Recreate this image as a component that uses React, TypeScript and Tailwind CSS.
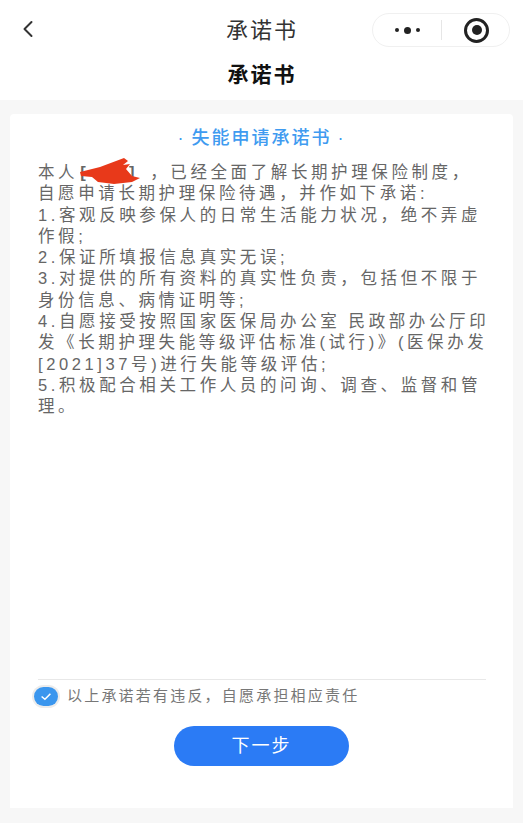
import { ChevronLeft } from "lucide-react";

const lines = [
  "自愿申请长期护理保险待遇，并作如下承诺:",
  "1.客观反映参保人的日常生活能力状况，绝不弄虚",
  "作假;",
  "2.保证所填报信息真实无误;",
  "3.对提供的所有资料的真实性负责，包括但不限于",
  "身份信息、病情证明等;",
  "4.自愿接受按照国家医保局办公室 民政部办公厅印",
  "发《长期护理失能等级评估标准(试行)》(医保办发",
  "[2021]37号)进行失能等级评估;",
  "5.积极配合相关工作人员的问询、调查、监督和管",
  "理。",
];

export default function App() {
  return (
    <div
      className="w-[523px] h-[823px] flex flex-col bg-[#f7f7f7] overflow-hidden"
      style={{ fontFamily: '"Liberation Sans", "Noto Sans CJK SC", sans-serif' }}
    >
      {/* nav bar */}
      <div className="h-[100px] shrink-0 bg-white flex flex-col">
        <div className="relative h-[60px] flex items-center justify-center">
          <ChevronLeft className="absolute left-[14px] top-[15px] w-[28px] h-[28px] text-[#333]" strokeWidth={1.7} />
          <span className="text-[22px] text-[#333] tracking-[2px] ml-[1px]">承诺书</span>
          <div className="absolute left-[372px] top-[13px] w-[138px] h-[34px] rounded-full border border-[#f0f0f0] flex items-center">
            <div className="w-[68px] flex items-center justify-center gap-[5px]">
              <span className="w-[4px] h-[4px] rounded-full bg-[#222]" />
              <span className="w-[7px] h-[7px] rounded-full bg-[#222]" />
              <span className="w-[4px] h-[4px] rounded-full bg-[#222]" />
            </div>
            <div className="w-px h-[20px] bg-[#e6e6e6]" />
            <div className="flex-1 flex items-center justify-center pl-[2px]">
              <div className="w-[25px] h-[25px] rounded-full border-[3px] border-[#222] flex items-center justify-center">
                <span className="w-[10px] h-[10px] rounded-full bg-[#222]" />
              </div>
            </div>
          </div>
        </div>
        <div className="text-center text-[21px] font-bold text-[#111] leading-[30px] tracking-[2px] ml-[1px]">承诺书</div>
      </div>

      {/* card */}
      <div className="mx-[10px] mt-[14px] h-[694px] bg-white rounded-t-[4px] flex flex-col">
        <div className="mt-[12px] flex justify-center items-center gap-[6px] text-[18px] font-medium text-[#3f9bf0] leading-[24px] tracking-[2px]">
          <span>·</span>
          <span>失能申请承诺书</span>
          <span>·</span>
        </div>
        <div className="mt-[12px] ml-[28px] text-[16.5px] text-[#666] leading-[21.3px] tracking-[3.6px] whitespace-nowrap">
          <div className="flex items-center">
            <span>本人</span>
            <span className="relative w-[72px] h-[21px] flex justify-between font-bold text-[#666]">
              <span className="ml-[2px]">[</span>
              <span className="mr-[12px]">]</span>
              <svg viewBox="0 0 62 26" className="absolute left-[2px] top-[-4px] w-[62px] h-[26px]">
                <path
                  d="M0 14 L20 9 L44 0 L48 3 L43 7 L50 6 L46 11 L52 18 L60 20 L52 24 L34 26 L18 24 L12 19 L1 18 Z"
                  fill="#e8391a"
                />
              </svg>
            </span>
            <span>，已经全面了解长期护理保险制度，</span>
          </div>
          {lines.map((line) => (
            <div key={line}>{line}</div>
          ))}
        </div>

        <div className="mt-auto ml-[28px] mr-[27px] h-px bg-[#e8e8e8]" />
        <div className="mt-[5px] ml-[22px] flex items-center gap-[7px]">
          <span className="w-[28px] h-[23px] rounded-full bg-[#ececec] flex items-center justify-center">
            <span className="w-[24px] h-[19px] rounded-full bg-[#3a96ee] flex items-center justify-center">
              <svg viewBox="0 0 12 10" className="w-[14px] h-[11px]" fill="none" stroke="white" strokeWidth="1.4">
                <path d="M2 5l3 2.5L10 2.5" />
              </svg>
            </span>
          </span>
          <span className="text-[15px] text-[#777] tracking-[2.2px]">以上承诺若有违反，自愿承担相应责任</span>
        </div>
        <button className="mt-[18px] mx-auto w-[175px] h-[40px] rounded-full bg-[#2b7bf5] text-white text-[18px] tracking-[2px]">
          下一步
        </button>
        <div className="h-[42px] shrink-0" />
      </div>
    </div>
  );
}
